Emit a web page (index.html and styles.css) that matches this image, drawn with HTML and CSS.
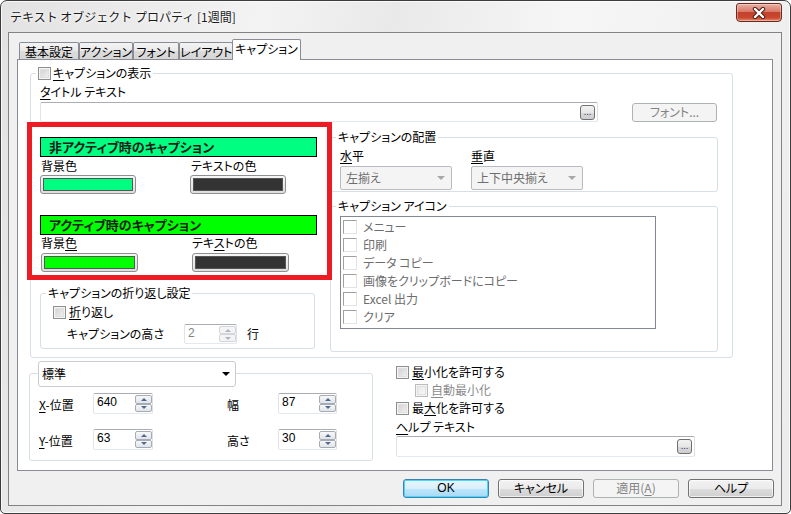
FILE: index.html
```html
<!DOCTYPE html>
<html lang="ja">
<head>
<meta charset="utf-8">
<title>テキスト オブジェクト プロパティ</title>
<link rel="stylesheet" href="styles.css">
</head>
<body>
<div class="window">
  <div class="titlebar">
    <span class="title">テキスト オブジェクト プロパティ [1週間]</span>
    <div class="close">
      <svg width="18" height="12" viewBox="0 0 18 12">
        <path d="M5 2 L13 10 M13 2 L5 10" stroke="#4a2018" stroke-width="4.4" stroke-linecap="round"/>
        <path d="M5 2 L13 10 M13 2 L5 10" stroke="#ffffff" stroke-width="2.4" stroke-linecap="round"/>
      </svg>
    </div>
  </div>
  <div class="client">
    <div class="tabs">
      <div class="tab t1">基本設定</div>
      <div class="tab t2">アクション</div>
      <div class="tab t3">フォント</div>
      <div class="tab t4">レイアウト</div>
      <div class="tab t5 selected">キャプション</div>
    </div>
    <div class="panel">
      <div class="group main-group">
        <div class="group-title main-title"><span class="cb"></span><span><u>キ</u>ャプションの表示</span></div>
        <div class="lbl title-lbl"><u>タ</u>イトル テキスト</div>
        <div class="title-row">
          <div class="field title-field"><span class="dots">...</span></div>
          <div class="btn disabled font-btn">フォント...</div>
        </div>
        <div class="cols">
          <div class="left-col">
            <div class="bar bar-inactive">非アクティブ時のキャプション</div>
            <div class="lbl-row r1"><span class="lbl col-lbl">背景色</span><span class="lbl">テキストの色</span></div>
            <div class="swatch-row r1">
              <div class="swatch"><i class="c-spring"></i></div>
              <div class="swatch s2"><i class="c-dark"></i></div>
            </div>
            <div class="bar bar-active">アクティブ時のキャプション</div>
            <div class="lbl-row r2"><span class="lbl col-lbl">背景<u>色</u></span><span class="lbl">テキ<u>ス</u>トの色</span></div>
            <div class="swatch-row r2">
              <div class="swatch"><i class="c-green"></i></div>
              <div class="swatch s2"><i class="c-dark"></i></div>
            </div>
            <div class="group wrap-group">
              <div class="group-title wrap-title">キャプションの折り返し設定</div>
              <div class="check-row"><span class="cb"></span><span><u>折</u>り返し</span></div>
              <div class="height-row">
                <span class="lbl height-lbl">キャプションの高さ</span>
                <div class="spin disabled small-spin"><span class="val">2</span><span class="spin-btns"><i class="up"></i><i class="down"></i></span></div>
                <span class="lbl row-unit">行</span>
              </div>
            </div>
            <div class="redbox"></div>
          </div>
          <div class="right-col">
            <div class="group align-group">
              <div class="group-title sub-title">キャプションの配置</div>
              <div class="align-cols">
                <div class="align-col">
                  <div class="lbl"><u>水</u>平</div>
                  <div class="dropdown"><span>左揃え</span><i class="tri-gray"></i></div>
                </div>
                <div class="align-col">
                  <div class="lbl"><u>垂</u>直</div>
                  <div class="dropdown"><span>上下中央揃え</span><i class="tri-gray"></i></div>
                </div>
              </div>
            </div>
            <div class="group icon-group">
              <div class="group-title sub-title">キャプション アイコン</div>
              <div class="listbox">
                <div class="li"><span class="lcb"></span><span>メニュー</span></div>
                <div class="li"><span class="lcb"></span><span>印刷</span></div>
                <div class="li"><span class="lcb"></span><span>データ コピー</span></div>
                <div class="li"><span class="lcb"></span><span>画像をクリップボードにコピー</span></div>
                <div class="li"><span class="lcb"></span><span>Excel 出力</span></div>
                <div class="li"><span class="lcb"></span><span>クリア</span></div>
              </div>
            </div>
          </div>
        </div>
      </div>
      <div class="bottom-row">
        <div class="group pos-group">
          <div class="combo"><span>標準</span><i class="tri-black"></i></div>
          <div class="pos-row first">
            <span class="lbl pos-lbl"><u>X</u>-位置</span>
            <div class="spin w60"><span class="val">640</span><span class="spin-btns"><i class="up"></i><i class="down"></i></span></div>
            <span class="lbl pos-lbl2">幅</span>
            <div class="spin w59"><span class="val">87</span><span class="spin-btns"><i class="up"></i><i class="down"></i></span></div>
          </div>
          <div class="pos-row second">
            <span class="lbl pos-lbl"><u>Y</u>-位置</span>
            <div class="spin w60"><span class="val">63</span><span class="spin-btns"><i class="up"></i><i class="down"></i></span></div>
            <span class="lbl pos-lbl2">高さ</span>
            <div class="spin w59"><span class="val">30</span><span class="spin-btns"><i class="up"></i><i class="down"></i></span></div>
          </div>
        </div>
        <div class="win-col">
          <div class="opt-row first"><span class="cb"></span><span><u>最</u>小化を許可する</span></div>
          <div class="opt-row indent dim"><span class="cb cb-dis"></span><span><u>自</u>動最小化</span></div>
          <div class="opt-row"><span class="cb"></span><span>最<u>大</u>化を許可する</span></div>
          <div class="lbl help-lbl"><u>ヘ</u>ルプ テキスト</div>
          <div class="field help-field"><span class="dots">...</span></div>
        </div>
      </div>
    </div>
    <div class="buttons">
      <div class="btn default">OK</div>
      <div class="btn">キャンセル</div>
      <div class="btn disabled">適用(<u>A</u>)</div>
      <div class="btn">ヘルプ</div>
    </div>
  </div>
</div>
</body>
</html>
```
FILE: styles.css
```css
* { box-sizing: border-box; }
html, body { margin: 0; padding: 0; }
body {
  width: 791px; height: 514px; overflow: hidden; background: #ffffff;
  font-family: "Noto Sans CJK JP", "Noto Sans", sans-serif;
  font-size: 12px; line-height: 14px; color: #000;
  font-feature-settings: "palt";
}
u { text-decoration: underline; text-underline-offset: 2px; text-decoration-thickness: 1px; }

.window {
  width: 791px; height: 514px;
  border: 1px solid #3c3c3c;
  border-radius: 7px 7px 5px 5px;
  background: linear-gradient(100deg, #e2e2e2 0%, #f3f3f3 30%, #e9e9e9 45%, #f6f6f6 65%, #ececec 100%);
  box-shadow: inset 0 0 0 1px rgba(255,255,255,0.75);
  display: flex; flex-direction: column;
}
.titlebar { height: 31px; display: flex; align-items: flex-start; padding: 0 8px 0 9px; flex: none; }
.title {
  margin-top: 8px; line-height: 15px; color: #1a1a1a;
  font-feature-settings: normal;
  text-shadow: 0 0 5px #fff, 0 0 3px #fff;
}
.close {
  margin-left: auto; margin-top: 2px; width: 46px; height: 19px;
  border: 1px solid #6a2a1f; border-radius: 3px 3px 4px 4px;
  background: linear-gradient(#eab0a3 0%, #d9796a 45%, #c3422c 50%, #c9472f 80%, #e58a6c 100%);
  box-shadow: inset 0 0 0 1px rgba(255,255,255,0.35);
  display: flex; align-items: center; justify-content: center;
}

.client {
  margin: 0 8px 0 7px; height: 474px; flex: none;
  border: 1px solid #838383; background: #f0f0f0;
  display: flex; flex-direction: column;
}

/* tabs */
.tabs { display: flex; align-items: flex-end; height: 20px; margin: 6px 0 0 10px; flex: none; }
.tab {
  height: 17px; padding-top: 2px; line-height: 14px; text-align: center;
  border: 1px solid #898c95; border-bottom: none; border-radius: 2px 2px 0 0;
  background: linear-gradient(#f4f4f4, #e9e9e9 50%, #dcdcdc 51%, #d6d6d6);
  white-space: nowrap;
}
.t1 { width: 60px; }
.t2 { width: 54px; }
.t3 { width: 46px; }
.t4 { width: 54px; }
.t5 { width: 69px; }
.tab.selected {
  height: 21px; margin-bottom: -1px; margin-left: -1px;
  background: #fff; position: relative; z-index: 1;
}

.panel {
  margin-left: 8px; width: 756px; height: 412px; flex: none;
  border: 1px solid #898c95; background: #fff;
}

/* generic group */
.group { border: 1px solid #d5dfe5; border-radius: 3px; display: flex; flex-direction: column; }
.group-title {
  align-self: flex-start; background: #fff; padding: 0 2px; height: 14px;
  margin-top: -8px; white-space: nowrap; display: flex; align-items: center;
}
.lbl { white-space: nowrap; line-height: 14px; }

.main-group { margin: 13px 0 0 12px; width: 703px; height: 285px; padding-left: 9px; }
.main-title { margin-left: -4px; gap: 2px; }
.title-lbl { margin-top: 5px; }
.title-row { display: flex; align-items: flex-start; margin-top: 3px; }

.field {
  border: 1px solid #abadb3; border-left-color: #e2e3ea; border-right-color: #dbdfe6; border-bottom-color: #e3e9ef;
  border-radius: 2px; background: #fff; display: flex; justify-content: flex-end; align-items: flex-start;
}
.title-field { width: 558px; height: 20px; padding: 2px 2px 0 0; }
.dots {
  width: 15px; height: 15px; border: 1px solid #707070; border-radius: 3px;
  background: linear-gradient(#f2f2f2, #e6e6e6 50%, #d8d8d8 51%, #cfcfcf);
  font-family: "Liberation Sans", sans-serif; font-size: 9px; line-height: 12px;
  text-align: center; color: #1a2a55; letter-spacing: 0;
}

.btn {
  width: 86px; height: 19px; border: 1px solid #707070; border-radius: 3px;
  background: linear-gradient(#f2f2f2, #ebebeb 50%, #dddddd 51%, #cfcfcf);
  box-shadow: inset 0 0 0 1px rgba(255,255,255,0.7);
  text-align: center; line-height: 16px; white-space: nowrap;
}
.btn.disabled { border-color: #adb2b5; background: #f4f4f4; color: #838383; box-shadow: none; }
.btn.default { border-color: #3c7fb1; box-shadow: inset 0 0 0 1px #48d8fb; background: linear-gradient(#eaf6fd, #d9f0fc 50%, #bee6fd 51%, #a7d9f5); font-family: "Liberation Sans", sans-serif; }
.font-btn { width: 85px; margin: 1px 0 0 34px; }

/* columns */
.cols { display: flex; }
.left-col { width: 290px; position: relative; display: flex; flex-direction: column; }
.right-col { width: 388px; display: flex; flex-direction: column; }

.bar {
  width: 277px; height: 20px; border: 1px solid #000;
  font-weight: bold; font-size: 13px; line-height: 18px; color: #1c1c1c;
  padding-left: 8px; white-space: nowrap;
}
.bar-inactive { margin-top: 15px; background: #00ff80; }
.bar-active { margin-top: 21px; background: #00ff00; }

.lbl-row { display: flex; }
.lbl-row.r1 { margin-top: 2px; padding-left: 1px; }
.lbl-row.r2 { margin-top: 1px; padding-left: 1px; }
.col-lbl { width: 150px; }
.lbl-row.r2 .col-lbl { width: 151px; }

.swatch-row { display: flex; }
.swatch-row.r1 { margin-top: 2px; }
.swatch-row.r2 { margin-top: 3px; padding-left: 1px; }
.swatch {
  width: 96px; height: 19px; border: 1px solid #8e8f8f; border-radius: 3px; padding: 2px;
  background: linear-gradient(#f6f6f6, #dedede);
}
.swatch-row.r2 .swatch { width: 97px; }
.swatch.s2 { margin-left: 54px; }
.swatch i { display: block; height: 100%; border: 1px solid #555; }
.c-spring { background: #00ff80; }
.c-green { background: #00ff00; }
.c-dark { background: #333333; }

.redbox {
  position: absolute; left: -13px; top: 0; width: 305px; height: 158px;
  border: 5px solid #ed1c24; pointer-events: none;
}

.wrap-group { margin-top: 21px; width: 275px; padding: 0 0 4px 12px; }
.wrap-title { margin-left: -7px; }
.check-row { display: flex; align-items: center; gap: 3px; margin-top: 5px; height: 14px; }
.height-row { display: flex; align-items: center; margin-top: 5px; }
.height-lbl { width: 117px; margin-left: 14px; }
.row-unit { margin-left: 10px; }

.cb {
  width: 13px; height: 13px; flex: none; border: 1px solid #8e8f8f; background: linear-gradient(135deg, #cbcbcb, #f7f7f7);
  box-shadow: inset 0 0 0 1px #f4f4f4, inset 0 0 0 2px #e0e0e0;
}
.cb-dis { border-color: #bcbcbc; background: linear-gradient(135deg, #e6e6e6, #fafafa); }

/* spin */
.spin {
  height: 21px; border: 1px solid #abadb3; border-left-color: #e2e3ea; border-right-color: #dbdfe6; border-bottom-color: #e3e9ef;
  border-radius: 2px; background: #fff; display: flex; justify-content: space-between;
}
.spin .val { padding: 2px 0 0 3px; line-height: 13px; font-family: "Liberation Sans", sans-serif; font-size: 12px; }
.spin-btns { width: 17px; display: flex; flex-direction: column; padding: 1px 0 1px 0; }
.spin-btns i {
  flex: 1; border: 1px solid #a6acb5; border-radius: 2px; background: linear-gradient(#f8f8f8, #e1e4e8);
  display: flex; align-items: center; justify-content: center;
}
.spin-btns i::after { content: ""; width: 0; height: 0; border-left: 3px solid transparent; border-right: 3px solid transparent; }
.spin-btns i.up::after { border-bottom: 3px solid #4f6893; }
.spin-btns i.down::after { border-top: 3px solid #4f6893; }
.spin.disabled .val { color: #838383; }
.spin.disabled .spin-btns i { border-color: #d3d6da; background: #f4f4f4; }
.spin.disabled .spin-btns i.up::after { border-bottom-color: #b0b4ba; }
.spin.disabled .spin-btns i.down::after { border-top-color: #b0b4ba; }
.small-spin { width: 53px; height: 20px; }
.w60 { width: 60px; }
.w59 { width: 59px; }

/* right column groups */
.align-group { margin-top: 15px; padding: 0 0 1px 9px; }
.sub-title { margin-left: -4px; }
.align-cols { display: flex; }
.align-col { width: 131px; display: flex; flex-direction: column; }
.align-col .lbl { margin-top: 5px; }
.dropdown {
  margin-top: 3px; width: 112px; height: 24px; border: 1px solid #b8bcc0; border-radius: 2px;
  background: #f4f4f4; color: #6d6d6d; display: flex; align-items: center; justify-content: space-between;
  padding: 0 6px 0 5px; white-space: nowrap;
}
.tri-gray { width: 0; height: 0; border-left: 4px solid transparent; border-right: 4px solid transparent; border-top: 4px solid #a8a8a8; }

.icon-group { margin-top: 14px; padding: 0 0 22px 9px; }
.listbox { margin-top: 3px; width: 316px; height: 113px; border: 1px solid #828790; padding: 1px 0 0 2px; }
.li { height: 18px; display: flex; align-items: center; gap: 6px; color: #6d6d6d; white-space: nowrap; }
.lcb {
  width: 14px; height: 14px; flex: none; background: #fff;
  border: 1px solid #e3e3e3; border-top-color: #a0a0a0; border-left-color: #a0a0a0;
}

/* bottom */
.bottom-row { display: flex; align-items: flex-start; }
.pos-group { margin: 15px 0 0 11px; width: 344px; height: 88px; padding: 0 0 10px 8px; }
.combo {
  margin-top: -13px; width: 198px; height: 26px; border: 1px solid #c9ccd0; border-radius: 3px; background: #fff;
  display: flex; align-items: center; justify-content: space-between; padding: 0 5px 0 3px;
}
.tri-black { width: 0; height: 0; border-left: 4px solid transparent; border-right: 4px solid transparent; border-top: 4px solid #000; }
.pos-row { display: flex; align-items: flex-start; }
.pos-row.first { margin-top: 6px; }
.pos-row.second { margin-top: 15px; }
.pos-lbl { width: 54px; margin: 5px 0 0 1px; }
.pos-lbl2 { width: 51px; margin: 5px 0 0 74px; }

.win-col { margin-left: 23px; width: 299px; display: flex; flex-direction: column; }
.opt-row { height: 18px; display: flex; align-items: center; gap: 3px; white-space: nowrap; }
.opt-row.first { margin-top: 5px; }
.opt-row.indent { padding-left: 19px; }
.opt-row.dim { color: #8a8a8a; }
.help-lbl { margin-top: 3px; }
.help-field { margin-top: 2px; width: 299px; height: 21px; padding: 2px 2px 0 0; }

.buttons { display: flex; justify-content: flex-end; gap: 9px; margin-top: 8px; padding-right: 7px; }
```
